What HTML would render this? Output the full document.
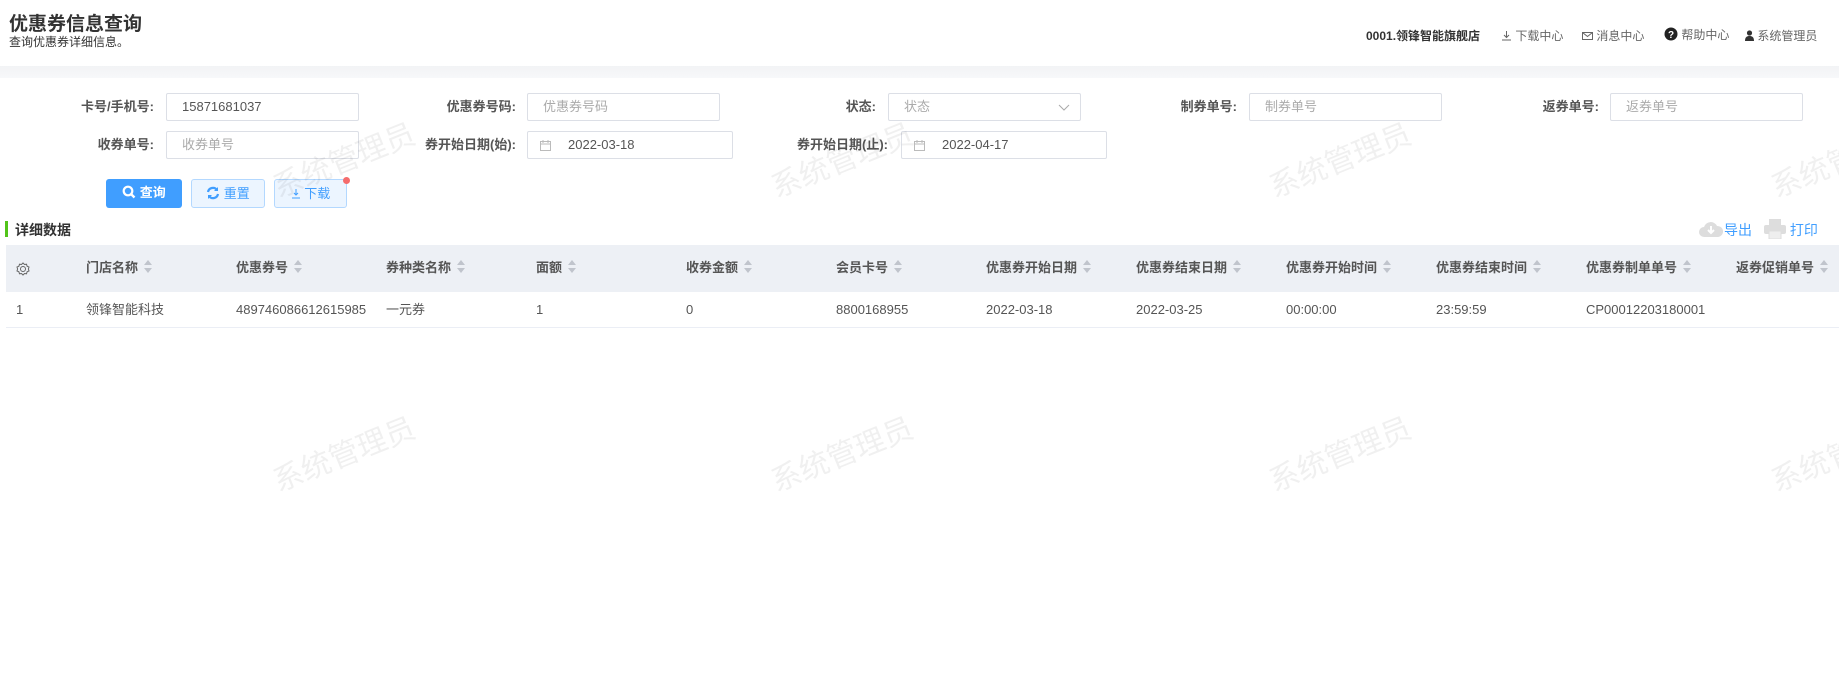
<!DOCTYPE html>
<html><head><meta charset="utf-8"><style>
*{margin:0;padding:0;box-sizing:border-box}
body{width:1839px;height:685px;background:#fff;font-family:"Liberation Sans","Noto Sans CJK SC",sans-serif;color:#333;position:relative;overflow:hidden;font-size:13px}
.a{position:absolute;white-space:nowrap}
.band{position:absolute;left:0;top:66px;width:1839px;height:12px;background:linear-gradient(#f2f3f5,#f7f8fa)}
.lbl{position:absolute;font-weight:bold;font-size:13px;color:#555;text-align:right;width:150px;line-height:28px}
.inp{position:absolute;height:28px;border:1px solid #dcdfe6;border-radius:2px;line-height:26px;padding-left:15px;font-size:13px;color:#555}
.ph{color:#aaa}
.btn{position:absolute;top:179px;height:29px;border-radius:3px;font-size:13px;line-height:27px;text-align:center;display:block}
.th{position:absolute;top:245px;left:6px;width:1833px;height:47px;background:#edf0f5}
.hc{position:absolute;top:260px;font-weight:bold;font-size:13px;color:#555;line-height:16px;height:16px}
.sort{display:inline-block;margin-left:6px;vertical-align:-1px;width:9px;height:13px;position:relative}
.sort:before{content:"";position:absolute;top:0;left:0;border:4.5px solid transparent;border-bottom:5px solid #c0c4cc;border-top:0}
.sort:after{content:"";position:absolute;bottom:0;left:0;border:4.5px solid transparent;border-top:5px solid #c0c4cc;border-bottom:0}
.tc{position:absolute;top:302px;font-size:13px;color:#555;line-height:16px;height:16px}
.hd{position:absolute;top:28px;font-size:12px;color:#666;line-height:16px;white-space:nowrap}
.wm{position:absolute;font-size:30px;color:rgba(0,0,0,0.06);transform:rotate(-22deg);white-space:nowrap}
</style></head><body>
<div class="a" style="left:9px;top:9px;font-size:19px;font-weight:bold;color:#333">优惠券信息查询</div>
<div class="a" style="left:9px;top:33px;font-size:12px;color:#333">查询优惠券详细信息。</div>

<div class="hd" style="left:1366px;font-weight:bold;color:#333">0001.领锋智能旗舰店</div>
<div class="hd" style="left:1501px"><svg width="11" height="11" viewBox="0 0 11 11" style="vertical-align:-1px"><path d="M5.5 1v6M3 5l2.5 2.5L8 5M1 10h9" stroke="#666" fill="none"/></svg> 下载中心</div>
<div class="hd" style="left:1582px"><svg width="11" height="10" viewBox="0 0 11 10" style="vertical-align:-1px"><rect x=".5" y="1.5" width="10" height="7" stroke="#666" fill="none"/><path d="M.5 1.5l5 4 5-4" stroke="#666" fill="none"/></svg> 消息中心</div>
<div class="hd" style="left:1664px;top:27px"><svg width="14" height="14" viewBox="0 0 14 14" style="vertical-align:-2px"><circle cx="7" cy="7" r="6.5" fill="#222"/><text x="7" y="11" font-size="10" font-weight="bold" fill="#fff" text-anchor="middle" font-family="Liberation Sans">?</text></svg> 帮助中心</div>
<div class="hd" style="left:1745px"><svg width="9" height="11" viewBox="0 0 9 11" style="vertical-align:-1px"><circle cx="4.5" cy="3" r="2.6" fill="#333"/><path d="M0 11c0-4 2-5 4.5-5S9 7 9 11z" fill="#333"/></svg> 系统管理员</div>

<div class="band"></div>

<div class="lbl" style="left:4px;top:93px">卡号/手机号:</div>
<div class="inp" style="left:166px;top:93px;width:193px">15871681037</div>
<div class="lbl" style="left:366px;top:93px">优惠券号码:</div>
<div class="inp ph" style="left:527px;top:93px;width:193px">优惠券号码</div>
<div class="lbl" style="left:726px;top:93px">状态:</div>
<div class="inp ph" style="left:888px;top:93px;width:193px">状态<svg width="12" height="7" viewBox="0 0 12 7" style="position:absolute;right:10px;top:10px"><path d="M1 1l5 5 5-5" stroke="#aaa" fill="none"/></svg></div>
<div class="lbl" style="left:1087px;top:93px">制券单号:</div>
<div class="inp ph" style="left:1249px;top:93px;width:193px">制券单号</div>
<div class="lbl" style="left:1449px;top:93px">返券单号:</div>
<div class="inp ph" style="left:1610px;top:93px;width:193px">返券单号</div>

<div class="lbl" style="left:4px;top:131px">收券单号:</div>
<div class="inp ph" style="left:166px;top:131px;width:193px">收券单号</div>
<div class="lbl" style="left:366px;top:131px">券开始日期(始):</div>
<div class="inp" style="left:527px;top:131px;width:206px;padding-left:40px"><svg width="11" height="11" viewBox="0 0 11 11" style="position:absolute;left:12px;top:8px"><rect x=".5" y="1.5" width="10" height="9" stroke="#bbb" fill="none"/><path d="M.5 4h10M3 0v3M8 0v3" stroke="#bbb"/></svg>2022-03-18</div>
<div class="lbl" style="left:738px;top:131px">券开始日期(止):</div>
<div class="inp" style="left:901px;top:131px;width:206px;padding-left:40px"><svg width="11" height="11" viewBox="0 0 11 11" style="position:absolute;left:12px;top:8px"><rect x=".5" y="1.5" width="10" height="9" stroke="#bbb" fill="none"/><path d="M.5 4h10M3 0v3M8 0v3" stroke="#bbb"/></svg>2022-04-17</div>

<div class="btn" style="left:106px;width:76px;background:#409eff;color:#fff;font-weight:bold"><svg width="14" height="14" viewBox="0 0 14 14" style="vertical-align:-2px"><circle cx="6" cy="6" r="4.3" stroke="#fff" stroke-width="2.2" fill="none"/><path d="M9 9l3.5 3.5" stroke="#fff" stroke-width="2.4"/></svg> 查询</div>
<div class="btn" style="left:191px;width:74px;background:#ecf5ff;border:1px solid #b3d8ff;color:#409eff"><svg width="14" height="14" viewBox="0 0 14 14" style="vertical-align:-2px"><path d="M2 6a5 5 0 0 1 9-2M12 8a5 5 0 0 1-9 2" stroke="#409eff" stroke-width="2.2" fill="none"/><path d="M12 1v4H8zM2 13V9h4z" fill="#409eff"/></svg> 重置</div>
<div class="btn" style="left:274px;width:73px;background:#ecf5ff;border:1px solid #b3d8ff;color:#409eff"><svg width="10" height="10" viewBox="0 0 10 10" style="vertical-align:-1px"><path d="M5 0v6M3 4l2 2 2-2M1 9h8" stroke="#409eff" fill="none"/></svg> 下载</div>
<div class="a" style="left:343px;top:177px;width:7px;height:7px;border-radius:50%;background:#f56c6c"></div>

<div class="a" style="left:5px;top:221px;width:3px;height:16px;background:#52c41a"></div>
<div class="a" style="left:15px;top:220px;font-size:14px;font-weight:bold;color:#333">详细数据</div>
<div class="a" style="left:1698px;top:219px;font-size:14px;color:#409eff"><svg width="26" height="20" viewBox="0 0 26 20" style="vertical-align:-4px"><path d="M6 18a5 5 0 0 1 0-10 7 7 0 0 1 13-1 5.5 5.5 0 0 1 1 11z" fill="#ddd"/><path d="M13 7v7M10 11l3 3 3-3" stroke="#fff" stroke-width="2" fill="none"/></svg>导出</div>
<div class="a" style="left:1764px;top:219px;font-size:14px;color:#409eff"><svg width="22" height="20" viewBox="0 0 22 20" style="vertical-align:-4px"><rect x="5" y="0" width="12" height="6" fill="#ddd"/><rect x="0" y="6" width="22" height="9" rx="2" fill="#ddd"/><rect x="5" y="12" width="12" height="8" fill="#eee" stroke="#ddd"/></svg> 打印</div>

<div class="th"></div>
<div class="a" style="left:16px;top:262px"><svg width="14" height="14" viewBox="0 0 14 14"><circle cx="7" cy="7" r="2.5" stroke="#666" fill="none"/><path d="M7 1l1.5 1.5 2-.3.6 2 1.9.8-.6 2 .6 2-1.9.8-.6 2-2-.3L7 13l-1.5-1.5-2 .3-.6-2-1.9-.8.6-2-.6-2 1.9-.8.6-2 2 .3z" stroke="#666" fill="none"/></svg></div>
<div class="hc" style="left:86px">门店名称<span class="sort"></span></div>
<div class="hc" style="left:236px">优惠券号<span class="sort"></span></div>
<div class="hc" style="left:386px">券种类名称<span class="sort"></span></div>
<div class="hc" style="left:536px">面额<span class="sort"></span></div>
<div class="hc" style="left:686px">收券金额<span class="sort"></span></div>
<div class="hc" style="left:836px">会员卡号<span class="sort"></span></div>
<div class="hc" style="left:986px">优惠券开始日期<span class="sort"></span></div>
<div class="hc" style="left:1136px">优惠券结束日期<span class="sort"></span></div>
<div class="hc" style="left:1286px">优惠券开始时间<span class="sort"></span></div>
<div class="hc" style="left:1436px">优惠券结束时间<span class="sort"></span></div>
<div class="hc" style="left:1586px">优惠券制单单号<span class="sort"></span></div>
<div class="hc" style="left:1736px">返券促销单号<span class="sort"></span></div>

<div class="tc" style="left:16px">1</div>
<div class="tc" style="left:86px">领锋智能科技</div>
<div class="tc" style="left:236px">489746086612615985</div>
<div class="tc" style="left:386px">一元券</div>
<div class="tc" style="left:536px">1</div>
<div class="tc" style="left:686px">0</div>
<div class="tc" style="left:836px">8800168955</div>
<div class="tc" style="left:986px">2022-03-18</div>
<div class="tc" style="left:1136px">2022-03-25</div>
<div class="tc" style="left:1286px">00:00:00</div>
<div class="tc" style="left:1436px">23:59:59</div>
<div class="tc" style="left:1586px">CP00012203180001</div>
<div class="a" style="left:6px;top:327px;width:1833px;height:1px;background:#ebeef5"></div>

<div class="wm" style="left:268px;top:136px">系统管理员</div>
<div class="wm" style="left:766px;top:136px">系统管理员</div>
<div class="wm" style="left:1264px;top:136px">系统管理员</div>
<div class="wm" style="left:1766px;top:136px">系统管理员</div>
<div class="wm" style="left:268px;top:430px">系统管理员</div>
<div class="wm" style="left:766px;top:430px">系统管理员</div>
<div class="wm" style="left:1264px;top:430px">系统管理员</div>
<div class="wm" style="left:1766px;top:430px">系统管理员</div>
</body></html>
